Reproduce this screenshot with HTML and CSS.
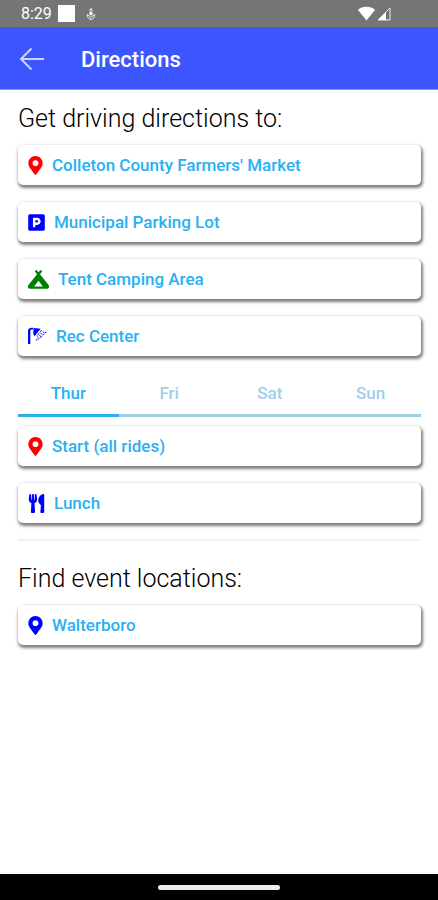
FILE: index.html
```html
<!DOCTYPE html>
<html lang="en">
<head>
<meta charset="utf-8">
<meta name="viewport" content="width=device-width, initial-scale=1">
<title>Directions</title>
<link rel="stylesheet" href="styles.css">
</head>
<body>
<svg class="symbols" aria-hidden="true">
  <symbol id="pin" viewBox="0 0 384 512"><path d="M172.268 501.67C26.97 291.031 0 269.413 0 192 0 85.961 85.961 0 192 0s192 85.961 192 192c0 77.413-26.97 99.031-172.268 309.67-9.535 13.774-29.93 13.773-39.464 0zM192 272c44.183 0 80-35.817 80-80s-35.817-80-80-80-80 35.817-80 80 35.817 80 80 80z"/></symbol>
</svg>
<div class="status">
  <span class="clock">8:29</span>
  <span class="square"></span>
  <svg class="usb" viewBox="0 0 10 14" aria-hidden="true"><path d="M5 1.500v5M3 3.500l2-2 2 2M1.200 7.500c0 6.500 7.600 6.500 7.600 0L5 10.500z" /><circle cx="5" cy="6.500" r="1.500"/></svg>
  <svg class="signals" viewBox="0 0 34 16" aria-hidden="true"><path d="M0 4C4-.300 13-.300 17 4L8.500 14.500z"/><path class="cell" d="M32 2v12H20z"/><path d="M20 14L28 6v8z"/></svg>
</div>
<header class="bar">
  <button class="back" aria-label="Back"><svg viewBox="0 0 26 24" aria-hidden="true"><path d="M25 12H2M12.500 1.500L2 12l10.500 10.500"/></svg></button>
  <h1>Directions</h1>
</header>
<main>
  <h2>Get driving directions to:</h2>
  <div class="list">
    <a class="card" href="#market"><svg class="icon red narrow"><use href="#pin"/></svg>Colleton County Farmers' Market</a>
    <a class="card" href="#parking"><svg class="icon blue medium" viewBox="0 0 448 512"><path d="M400 32H48C21.500 32 0 53.500 0 80v352c0 26.500 21.500 48 48 48h352c26.500 0 48-21.500 48-48V80c0-26.500-21.500-48-48-48zM240 320h-48v48c0 8.800-7.200 16-16 16h-32c-8.800 0-16-7.200-16-16V144c0-8.800 7.200-16 16-16h96c52.900 0 96 43.100 96 96s-43.100 96-96 96zm0-128h-48v64h48c17.600 0 32-14.400 32-32s-14.400-32-32-32z"/></svg>Municipal Parking Lot</a>
    <a class="card" href="#camping"><svg class="icon green wide" viewBox="0 0 576 512"><path d="M377 52c11-13.800 8.800-33.900-5-45s-33.900-8.800-45 5L288 60.800 249 12c-11-13.800-31.200-16-45-5s-16 31.200-5 45l48 60L12.300 405.400C4.300 415.400 0 427.700 0 440.400V464c0 26.500 21.500 48 48 48H528c26.500 0 48-21.500 48-48V440.400c0-12.700-4.300-25.100-12.300-35L329 112l48-60zM288 448H168.500L288 291.700 407.500 448H288z"/></svg>Tent Camping Area</a>
    <a class="card" href="#rec"><svg class="icon blue square-icon" viewBox="0 0 512 512"><path d="M0 460V110C0 40 50 22 105 22h40v42h-35c-30 0-48 12-48 46v350zM165 24l175 22-165 200c-42-60-46-140-10-222z"/><path class="spray" d="M360 90l-30 36M405 130l24 18M460 150l30-8M345 170l34 26M300 165l-44 56M405 212l28-24M310 225l28 20M245 262l28 22M370 250l-32 36M300 300l-28 32M240 330l-16 28"/></svg>Rec Center</a>
  </div>
  <div class="tabs" role="tablist">
    <button role="tab" aria-selected="true">Thur</button>
    <button role="tab" aria-selected="false">Fri</button>
    <button role="tab" aria-selected="false">Sat</button>
    <button role="tab" aria-selected="false">Sun</button>
  </div>
  <div class="list">
    <a class="card" href="#start"><svg class="icon red narrow"><use href="#pin"/></svg>Start (all rides)</a>
    <a class="card" href="#lunch"><svg class="icon blue medium" viewBox="0 0 416 512"><path d="M207.900 15.200c.8 4.700 16.100 94.500 16.100 128.800 0 52.300-27.800 89.600-68.900 104.600L168 486.700c.7 13.700-10.200 25.300-24 25.300H80c-13.700 0-24.700-11.500-24-25.300l12.900-238.100C27.700 233.600 0 196.200 0 144 0 109.600 15.300 19.900 16.100 15.200 19.300-5.100 61.400-5.400 64 16.300v141.200c1.300 3.400 15.100 3.200 16 0 1.400-25.300 7.900-139.200 8-141.800 3.300-20.800 44.700-20.800 47.900 0 .2 2.700 6.600 116.500 8 141.800.9 3.200 14.800 3.400 16 0V16.300c2.600-21.600 44.800-21.400 48-1.100zm119.200 285.700l-15 185.100c-1.200 14 9.900 26 23.900 26h56c13.300 0 24-10.700 24-24V24c0-13.200-10.700-24-24-24-82.500 0-221.400 178.500-64.900 300.900z"/></svg>Lunch</a>
  </div>
  <hr>
  <h2>Find event locations:</h2>
  <a class="card" href="#walterboro"><svg class="icon blue narrow"><use href="#pin"/></svg>Walterboro</a>
</main>
<footer class="nav"><span class="handle"></span></footer>
</body>
</html>
```
FILE: styles.css
```css
* { box-sizing: border-box; }

body {
  margin: 0;
  min-height: 100vh;
  display: flex;
  flex-direction: column;
  background: #fff;
  color: #000;
  font-family: Roboto, sans-serif;
}

.symbols { display: none; }

.status {
  height: 27px;
  padding: 0 46px 0 21px;
  display: flex;
  align-items: center;
  background: #757575;
  color: #fff;
  font-size: 16px;
}
.square { width: 17px; height: 17px; margin-left: 6px; background: #fff; }
.usb { width: 10px; height: 14px; margin-left: 11px; fill: #eee; stroke: #eee; }
.usb path { fill: none; }
.signals { width: 34px; height: 16px; margin-left: auto; fill: #fff; }
.signals .cell { fill: none; stroke: #eee; stroke-width: 1; }

.bar {
  height: 63px;
  padding: 2px 19px 0;
  display: flex;
  align-items: center;
  gap: 36px;
  background: #3c55ff;
  border-bottom: 1px solid #8090ff;
  color: #fff;
}
.back { padding: 0; border: 0; background: none; }
.back svg {
  display: block;
  width: 26px;
  height: 24px;
  fill: none;
  stroke: #cdd4ff;
  stroke-width: 2;
}
h1 { margin: 0; font-size: 22px; font-weight: 500; }

main { flex: 1; padding: 13px 17px 16px 18px; }
h2 { margin: 0 0 10px; font-size: 25px; line-height: 32px; font-weight: 300; }

.list { display: grid; gap: 17px; }
.card {
  height: 40px;
  padding: 0 10px;
  display: flex;
  align-items: center;
  gap: 9px;
  border-radius: 5px;
  background: #fff;
  box-shadow: 1px 2px 3px 1px rgba(0, 0, 0, .5);
  color: #29b0f4;
  font-size: 17px;
  font-weight: 500;
  text-decoration: none;
}
.icon { height: 19px; flex: none; }
.narrow { width: 15px; }
.medium { width: 17px; }
.square-icon { width: 19px; }
.wide { width: 21px; }
.red { fill: #f00; }
.blue { fill: #00f; }
.green { fill: #008000; }
.spray { fill: none; stroke: #00f; stroke-width: 24; stroke-linecap: round; }

.tabs { display: grid; grid-template-columns: repeat(4, 1fr); margin: 16px 0 9px; }
.tabs button {
  height: 45px;
  padding: 0;
  border: 0;
  border-bottom: 3px solid #9fcfe8;
  background: none;
  color: #9fcfe8;
  font: 500 17px Roboto, sans-serif;
}
.tabs [aria-selected="true"] { border-color: #29b1ef; color: #29b0f4; }

hr { margin: 16px 0 22px; border: 0; border-top: 2px solid #e8f5ff; }

.nav { height: 26px; display: flex; align-items: center; justify-content: center; background: #000; }
.handle { width: 122px; height: 5px; border-radius: 3px; background: #eee; }
```
